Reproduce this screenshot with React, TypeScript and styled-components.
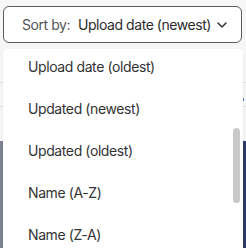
import styled, { createGlobalStyle } from "styled-components";

const GlobalStyle = createGlobalStyle`
  html, body {
    margin: 0;
    padding: 0;
    background: #f6f6f6;
    font-family: Inter, "Liberation Sans", sans-serif;
  }
  * { box-sizing: border-box; }
`;

const options = [
  "Upload date (oldest)",
  "Updated (newest)",
  "Updated (oldest)",
  "Name (A-Z)",
  "Name (Z-A)",
];

const Chevron = () => (
  <svg width="10" height="6" viewBox="0 0 10 6" fill="none">
    <path d="M1 1l4 4 4-4" stroke="#333" strokeWidth="1.5" strokeLinecap="round" strokeLinejoin="round" />
  </svg>
);

const App = () => {
  return (
    <>
      <GlobalStyle />
      <Page>
        <SortButton>
          <Label>Sort by:</Label>
          <Value>Upload date (newest)</Value>
          <Chevron />
        </SortButton>
        <Behind>
          <FilterRow />
          <TagRow>
            <Dot />
          </TagRow>
          <Cover />
        </Behind>
        <Menu>
          <ScrollThumb />
          {options.map((o) => (
            <Option key={o}>{o}</Option>
          ))}
        </Menu>
      </Page>
    </>
  );
};

const Page = styled.div`
  position: relative;
  width: 246px;
  height: 248px;
  overflow: hidden;
  padding: 6px 4px 0 3px;
`;

const SortButton = styled.div`
  display: flex;
  align-items: center;
  height: 37px;
  padding: 0 0 0 18px;
  background: #fff;
  border: 1px solid #5c5c5c;
  border-radius: 6px;
  font-size: 14px;
  letter-spacing: -0.45px;
  white-space: nowrap;

  svg {
    margin-left: 6px;
    flex-shrink: 0;
  }
`;

const Label = styled.span`
  color: #555;
  margin-right: 8px;
`;

const Value = styled.span`
  color: #2b2b2b;
`;

const Behind = styled.div`
  display: flex;
  flex-direction: column;
  margin: 0 -4px 0 -3px;
`;

const FilterRow = styled.div`
  height: 40px;
  border-bottom: 1px solid #dcdcdc;
`;

const TagRow = styled.div`
  position: relative;
  height: 24px;
  border-bottom: 1px solid #dcdcdc;
`;

const Dot = styled.span`
  position: absolute;
  right: 2px;
  top: 15px;
  width: 2px;
  height: 3px;
  background: #4a86e8;
`;

const Cover = styled.div`
  margin-top: 34px;
  height: 120px;
  background: linear-gradient(90deg, #7b818f 0%, #6f86ab 40%, #3d4f86 80%, #2e3a66 100%);
`;

const Menu = styled.div`
  position: absolute;
  top: 49px;
  left: 3px;
  width: 240px;
  height: 220px;
  background: #fff;
  border-radius: 4px;
  box-shadow: 0 1px 3px rgba(0, 0, 0, 0.06);
`;

const Option = styled.div`
  height: 41.8px;
  display: flex;
  align-items: center;
  padding-left: 25px;
  padding-bottom: 6px;
  font-size: 14px;
  letter-spacing: -0.4px;
  white-space: nowrap;
  color: #333;
`;

const ScrollThumb = styled.div`
  position: absolute;
  top: 79px;
  right: 3px;
  width: 7px;
  height: 75px;
  border-radius: 4px;
  background: #c9c9c9;
`;

export default App;
